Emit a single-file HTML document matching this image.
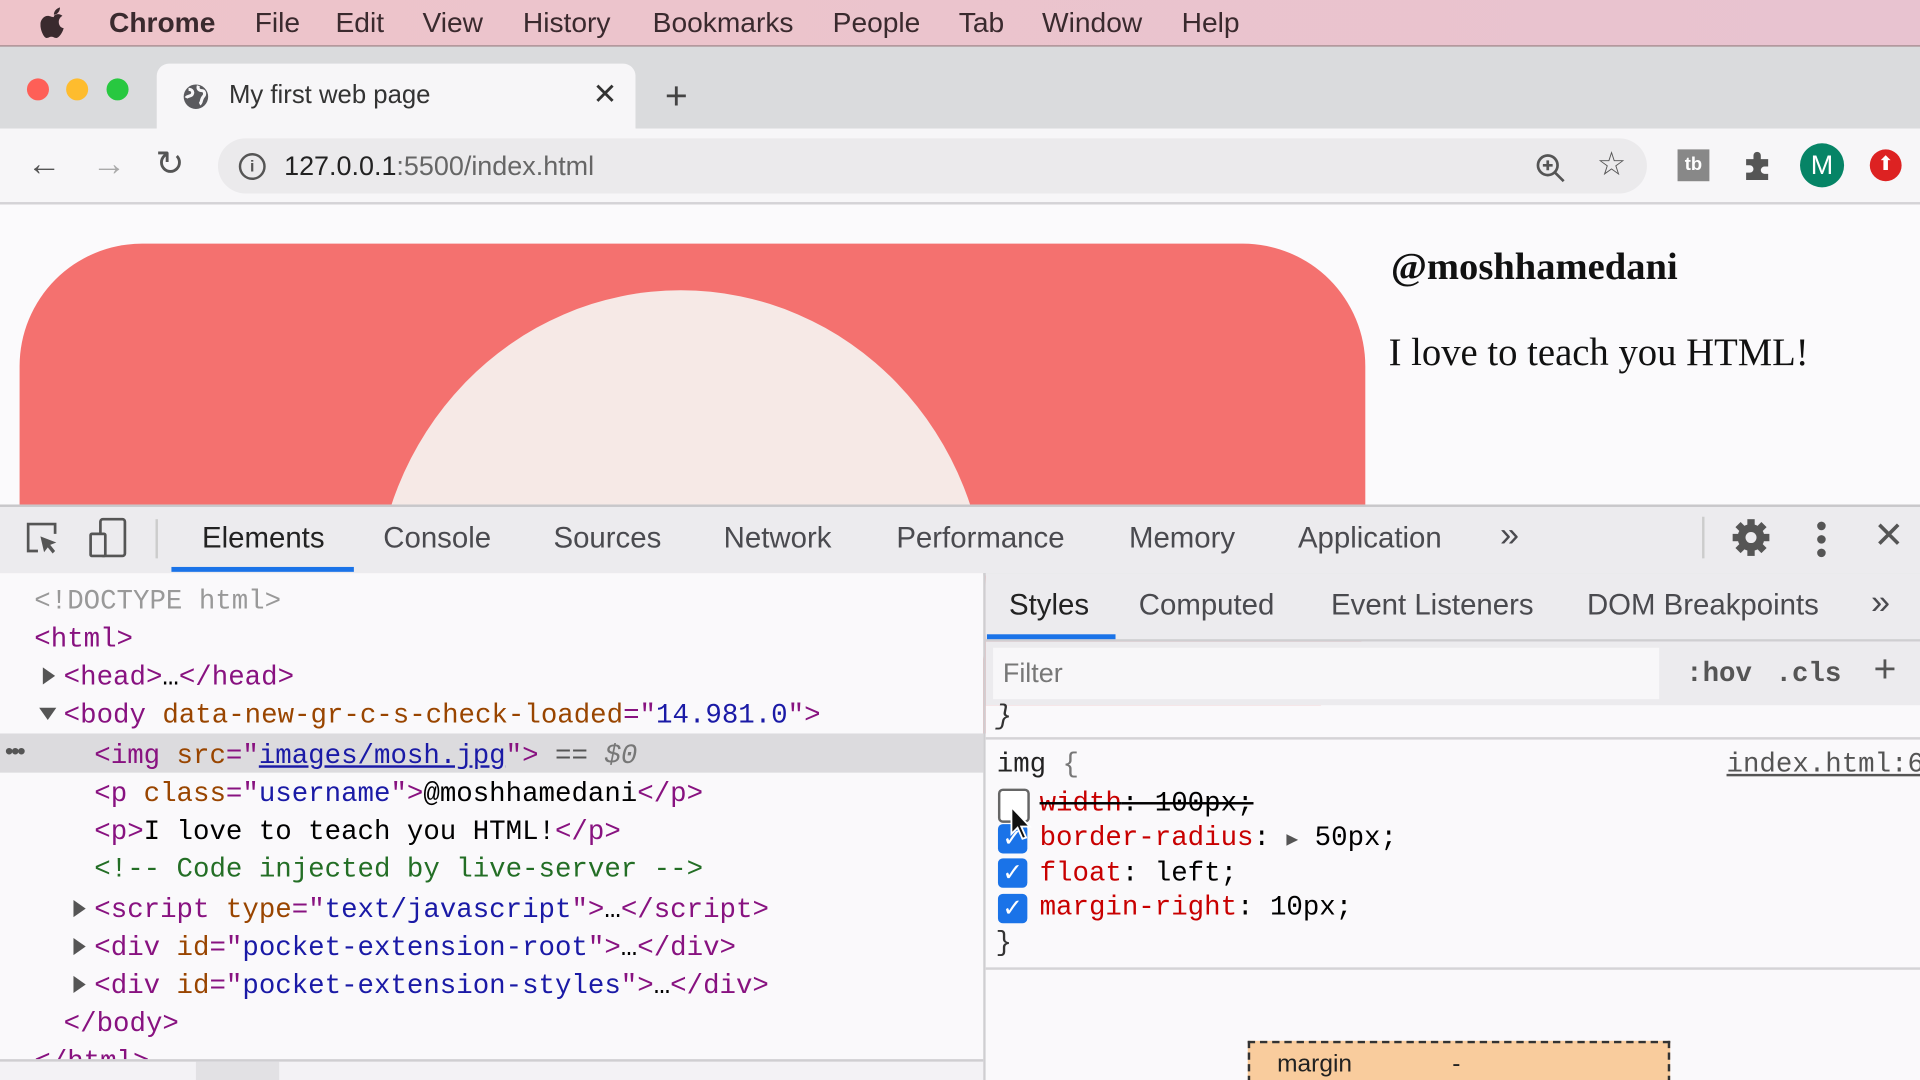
<!DOCTYPE html>
<html><head><meta charset="utf-8"><style>
html,body{margin:0;padding:0;width:1920px;height:1080px;overflow:hidden;background:#faf9fb}
#w{position:absolute;left:0;top:0;width:1568px;height:882px;transform:scale(1.22449);transform-origin:0 0;overflow:hidden;font-family:"Liberation Sans",sans-serif}
.a{position:absolute;white-space:nowrap}
.mn{position:absolute;top:5px;font-size:23px;color:#3a2a2e}
.m{font-family:"Liberation Mono",monospace;font-size:22.4px}
.tag{color:#881280}.at{color:#994500}.av{color:#1a1aa6}.cm{color:#236e25}.gr{color:#9a9a9a}
.tb{font-size:24px;color:#4a4a4f}
.tri{display:inline-block;width:0;height:0;border-top:7px solid transparent;border-bottom:7px solid transparent;border-left:10px solid #555;position:absolute}
.trd{display:inline-block;width:0;height:0;border-left:7px solid transparent;border-right:7px solid transparent;border-top:10px solid #555;position:absolute}
.cb{position:absolute;width:24px;height:24px;border-radius:4px;background:#1a73e8;color:#fff;font-size:20px;line-height:24px;text-align:center}
</style></head><body><div id="w">
<div class="a" style="left:0;top:0;width:1568px;height:37px;background:linear-gradient(90deg,#eec4ca,#e8c3d0);border-bottom:1px solid #9b7b80"></div>
<svg class="a" style="left:33px;top:6px" width="22" height="26" viewBox="0 0 22 26"><path d="M11 7c2-2 5-2 7 0-2 1-3 3-3 5 0 3 2 5 4 5-1 4-4 8-6 8-2 0-2-1-4-1s-2 1-4 1C3 25 0 19 0 14c0-4 3-7 6-7 2 0 3 1 5 1zM11 6c0-3 2-5 5-6 0 3-2 6-5 6z" fill="#3a2a2e"/></svg>
<div class="mn" style="left:89px"><b>Chrome</b></div>
<div class="mn" style="left:208px">File</div>
<div class="mn" style="left:274px">Edit</div>
<div class="mn" style="left:345px">View</div>
<div class="mn" style="left:427px">History</div>
<div class="mn" style="left:533px">Bookmarks</div>
<div class="mn" style="left:680px">People</div>
<div class="mn" style="left:783px">Tab</div>
<div class="mn" style="left:851px">Window</div>
<div class="mn" style="left:965px">Help</div>
<div class="a" style="left:0;top:38px;width:1568px;height:67px;background:#dadbdd"></div>
<div class="a" style="left:22px;top:64px;width:18px;height:18px;border-radius:50%;background:#fe5f57"></div>
<div class="a" style="left:54px;top:64px;width:18px;height:18px;border-radius:50%;background:#febc2e"></div>
<div class="a" style="left:87px;top:64px;width:18px;height:18px;border-radius:50%;background:#28c840"></div>
<div class="a" style="left:128px;top:52px;width:391px;height:60px;background:#f7f6f8;border-radius:10px 10px 0 0"></div>
<svg class="a" style="left:148px;top:67px" width="24" height="24" viewBox="0 0 24 24"><circle cx="12" cy="12" r="10" fill="#5a5a5e"/><path d="M6 6c3 0 4 2 3 4s-4 1-5 3M14 3c-1 3 1 4 3 4s3 3 1 5-1 5-3 6" stroke="#f7f6f8" stroke-width="2.5" fill="none"/></svg>
<div class="a" style="left:187px;top:66px;font-size:21px;color:#333">My first web page</div>
<div class="a" style="left:484px;top:63px;font-size:24px;color:#333">✕</div>
<div class="a" style="left:543px;top:60px;font-size:32px;color:#444">+</div>
<div class="a" style="left:0;top:105px;width:1568px;height:60px;background:#f7f6f8;border-bottom:2px solid #d4d3d6"></div>
<div class="a" style="left:22px;top:118px;font-size:28px;color:#555">←</div>
<div class="a" style="left:75px;top:118px;font-size:28px;color:#aaa">→</div>
<div class="a" style="left:127px;top:117px;font-size:28px;color:#555">↻</div>
<div class="a" style="left:178px;top:113px;width:1167px;height:45px;border-radius:23px;background:#ebeaec"></div>
<div class="a" style="left:195px;top:125px;width:18px;height:18px;border:2px solid #555;border-radius:50%;font-size:13px;line-height:18px;text-align:center;color:#555;font-weight:bold">i</div>
<div class="a" style="left:232px;top:123px;font-size:22px;color:#222">127.0.0.1<span style="color:#666">:5500/index.html</span></div>
<svg class="a" style="left:1253px;top:124px" width="26" height="26" viewBox="0 0 26 26"><circle cx="11" cy="11" r="8" stroke="#555" stroke-width="2.2" fill="none"/><path d="M17 17l7 7M7 11h8M11 7v8" stroke="#555" stroke-width="2.2"/></svg>
<div class="a" style="left:1304px;top:119px;font-size:27px;color:#555">☆</div>
<div class="a" style="left:1370px;top:122px;width:26px;height:26px;background:#888;color:#fff;font-size:15px;font-weight:bold;line-height:26px;text-align:center">tb</div>
<svg class="a" style="left:1423px;top:122px" width="26" height="26" viewBox="0 0 26 26"><path d="M3 8h6V5a3 3 0 016 0v3h6v6h-3a3 3 0 000 6h3v5H3v-6h3a3 3 0 000-6H3z" fill="#555"/></svg>
<div class="a" style="left:1470px;top:117px;width:36px;height:36px;border-radius:50%;background:#068466;color:#fff;font-size:22px;line-height:36px;text-align:center">M</div>
<div class="a" style="left:1527px;top:122px;width:26px;height:26px;border-radius:50%;background:#d22;color:#fff;font-size:16px;line-height:26px;text-align:center">⬆</div>
<div class="a" style="left:0;top:167px;width:1568px;height:245px;background:#fbfafc"></div>
<div class="a" style="left:16px;top:199px;width:1099px;height:400px;border-radius:100px;background:#f4716f;overflow:hidden">
 <div class="a" style="left:290px;top:38px;width:500px;height:520px;border-radius:50%;background:#f6e9e6"></div>
</div>
<div class="a" style="left:1136px;top:200px;font-family:'Liberation Serif',serif;font-size:31.5px;font-weight:bold;color:#111">@moshhamedani</div>
<div class="a" style="left:1134px;top:270px;font-family:'Liberation Serif',serif;font-size:31.6px;color:#111">I love to teach you HTML!</div>
<div class="a" style="left:0;top:412px;width:1568px;height:54px;background:#ecebee;border-top:2px solid #c8c7ca;border-bottom:2px solid #cfced1"></div>
<svg class="a" style="left:20px;top:425px" width="30" height="30" viewBox="0 0 30 30"><path d="M11 25H3V3h22v8" stroke="#555" stroke-width="2.2" fill="none"/><path d="M13 13l13 5-5 2 4 5-2 2-4-5-3 4z" fill="#555"/></svg>
<svg class="a" style="left:72px;top:422px" width="34" height="34" viewBox="0 0 34 34"><rect x="10" y="2" width="20" height="30" rx="2" stroke="#555" stroke-width="2.2" fill="none"/><rect x="2" y="14" width="12" height="18" rx="1" stroke="#555" stroke-width="2.2" fill="#ecebee"/></svg>
<div class="a" style="left:127px;top:424px;width:2px;height:32px;background:#ccc"></div>
<div class="a tb" style="left:165px;top:426px;color:#222">Elements</div>
<div class="a" style="left:140px;top:463px;width:149px;height:4px;background:#1a73e8"></div>
<div class="a tb" style="left:313px;top:426px">Console</div>
<div class="a tb" style="left:452px;top:426px">Sources</div>
<div class="a tb" style="left:591px;top:426px">Network</div>
<div class="a tb" style="left:732px;top:426px">Performance</div>
<div class="a tb" style="left:922px;top:426px">Memory</div>
<div class="a tb" style="left:1060px;top:426px">Application</div>
<div class="a tb" style="left:1225px;top:421px;font-size:28px">»</div>
<div class="a" style="left:1390px;top:422px;width:2px;height:34px;background:#ccc"></div>
<svg class="a" style="left:1413px;top:422px" width="34" height="34" viewBox="0 0 34 34"><g fill="#555"><circle cx="17" cy="17" r="11"/><rect x="14" y="2" width="6" height="30"/><rect x="2" y="14" width="30" height="6"/><rect x="14" y="2" width="6" height="30" transform="rotate(45 17 17)"/><rect x="14" y="2" width="6" height="30" transform="rotate(-45 17 17)"/></g><circle cx="17" cy="17" r="4.5" fill="#ecebee"/></svg>
<div class="a" style="left:1484px;top:426px;width:7px;height:7px;border-radius:50%;background:#555;box-shadow:0 11px 0 #555,0 22px 0 #555"></div>
<div class="a" style="left:1530px;top:420px;font-size:30px;color:#555">✕</div>
<div class="a" style="left:0;top:468px;width:803px;height:398px;background:#faf9fb"></div>
<div class="a" style="left:0;top:599px;width:803px;height:32px;background:#dcdbde"></div>
<div class="a m" style="left:28px;top:478px;color:#999">&lt;!DOCTYPE html&gt;</div>
<div class="a m tag" style="left:28px;top:509px">&lt;html&gt;</div>
<span class="tri" style="left:35px;top:545px"></span>
<div class="a m" style="left:52px;top:540px"><span class="tag">&lt;head&gt;</span>…<span class="tag">&lt;/head&gt;</span></div>
<span class="trd" style="left:32px;top:578px"></span>
<div class="a m" style="left:52px;top:571px"><span class="tag">&lt;body </span><span class="at">data-new-gr-c-s-check-loaded</span><span class="tag">="</span><span class="av">14.981.0</span><span class="tag">"&gt;</span></div>
<div class="a" style="left:4px;top:603px;font-size:20px;color:#555;letter-spacing:-2px">•••</div>
<div class="a m" style="left:77px;top:604px"><span class="tag">&lt;img </span><span class="at">src</span><span class="tag">="</span><span class="av" style="text-decoration:underline;color:#1a1aa6">images/mosh.jpg</span><span class="tag">"&gt;</span> <span style="color:#555">==</span> <i style="color:#777">$0</i></div>
<div class="a m" style="left:77px;top:635px"><span class="tag">&lt;p </span><span class="at">class</span><span class="tag">="</span><span class="av">username</span><span class="tag">"&gt;</span>@moshhamedani<span class="tag">&lt;/p&gt;</span></div>
<div class="a m" style="left:77px;top:666px"><span class="tag">&lt;p&gt;</span>I love to teach you HTML!<span class="tag">&lt;/p&gt;</span></div>
<div class="a m cm" style="left:77px;top:697px">&lt;!-- Code injected by live-server --&gt;</div>
<span class="tri" style="left:60px;top:735px"></span>
<div class="a m" style="left:77px;top:730px"><span class="tag">&lt;script </span><span class="at">type</span><span class="tag">="</span><span class="av">text/javascript</span><span class="tag">"&gt;</span>…<span class="tag">&lt;/script&gt;</span></div>
<span class="tri" style="left:60px;top:766px"></span>
<div class="a m" style="left:77px;top:761px"><span class="tag">&lt;div </span><span class="at">id</span><span class="tag">="</span><span class="av">pocket-extension-root</span><span class="tag">"&gt;</span>…<span class="tag">&lt;/div&gt;</span></div>
<span class="tri" style="left:60px;top:797px"></span>
<div class="a m" style="left:77px;top:792px"><span class="tag">&lt;div </span><span class="at">id</span><span class="tag">="</span><span class="av">pocket-extension-styles</span><span class="tag">"&gt;</span>…<span class="tag">&lt;/div&gt;</span></div>
<div class="a m tag" style="left:52px;top:823px">&lt;/body&gt;</div>
<div class="a m tag" style="left:28px;top:854px">&lt;/html&gt;</div>
<div class="a" style="left:0;top:865px;width:803px;height:17px;background:#f3f2f5;border-top:2px solid #cfced1"></div>
<div class="a" style="left:160px;top:867px;width:68px;height:15px;background:#e2e1e4"></div>
<div class="a" style="left:803px;top:468px;width:2px;height:414px;background:#cfced1"></div>
<div class="a" style="left:805px;top:468px;width:763px;height:54px;background:#ecebee;border-bottom:2px solid #cfced1"></div>
<div class="a tb" style="left:824px;top:481px;color:#222">Styles</div>
<div class="a" style="left:806px;top:518px;width:105px;height:4px;background:#1a73e8"></div>
<div class="a tb" style="left:930px;top:481px">Computed</div>
<div class="a tb" style="left:1087px;top:481px">Event Listeners</div>
<div class="a tb" style="left:1296px;top:481px">DOM Breakpoints</div>
<div class="a tb" style="left:1528px;top:476px;font-size:28px">»</div>
<div class="a" style="left:805px;top:524px;width:763px;height:52px;background:#ecebee"></div>
<div class="a" style="left:811px;top:529px;width:544px;height:42px;background:#f8f7f9"></div>
<div class="a" style="left:819px;top:537px;font-size:22px;color:#777">Filter</div>
<div class="a m" style="left:1377px;top:537px;font-weight:bold;color:#555">:hov</div>
<div class="a m" style="left:1450px;top:537px;font-weight:bold;color:#555">.cls</div>
<div class="a" style="left:1530px;top:528px;font-size:32px;color:#555">+</div>
<div class="a" style="left:805px;top:576px;width:763px;height:306px;background:#faf9fb"></div>
<div class="a m" style="left:813px;top:572px;color:#333"><i>}</i></div>
<div class="a" style="left:805px;top:602px;width:763px;height:2px;background:#d4d3d6"></div>
<div class="a m" style="left:814px;top:611px;color:#222">img <span style="color:#777">{</span></div>
<div class="a m" style="left:1410px;top:611px;color:#555;text-decoration:underline">index.html:6</div>
<div class="a" style="left:815px;top:644px;width:22px;height:24px;border:2px solid #666;border-radius:4px;background:#fff"></div>
<div class="a m" style="left:849px;top:643px;text-decoration:line-through"><span style="color:#c80000">width</span>: 100px;</div>
<div class="cb" style="left:815px;top:673px">✓</div>
<div class="a m" style="left:849px;top:671px"><span style="color:#c80000">border-radius</span>: <span style="font-size:16px;color:#555">▶</span> 50px;</div>
<div class="cb" style="left:815px;top:701px">✓</div>
<div class="a m" style="left:849px;top:700px"><span style="color:#c80000">float</span>: left;</div>
<div class="cb" style="left:815px;top:730px">✓</div>
<div class="a m" style="left:849px;top:728px"><span style="color:#c80000">margin-right</span>: 10px;</div>
<div class="a m" style="left:813px;top:757px;color:#333">}</div>
<svg class="a" style="left:825px;top:658px" width="18" height="28" viewBox="0 0 18 28"><path d="M1 1v22l5-5 4 9 3-1-4-9h7z" fill="#111" stroke="#fff" stroke-width="1.5"/></svg>
<div class="a" style="left:805px;top:790px;width:763px;height:2px;background:#d4d3d6"></div>
<div class="a" style="left:1019px;top:850px;width:341px;height:40px;background:#f9cc9d;border:2px dashed #333"></div>
<div class="a" style="left:1043px;top:858px;font-size:20px;color:#222">margin</div>
<div class="a" style="left:1186px;top:858px;font-size:20px;color:#222">-</div>
</div></body></html>
